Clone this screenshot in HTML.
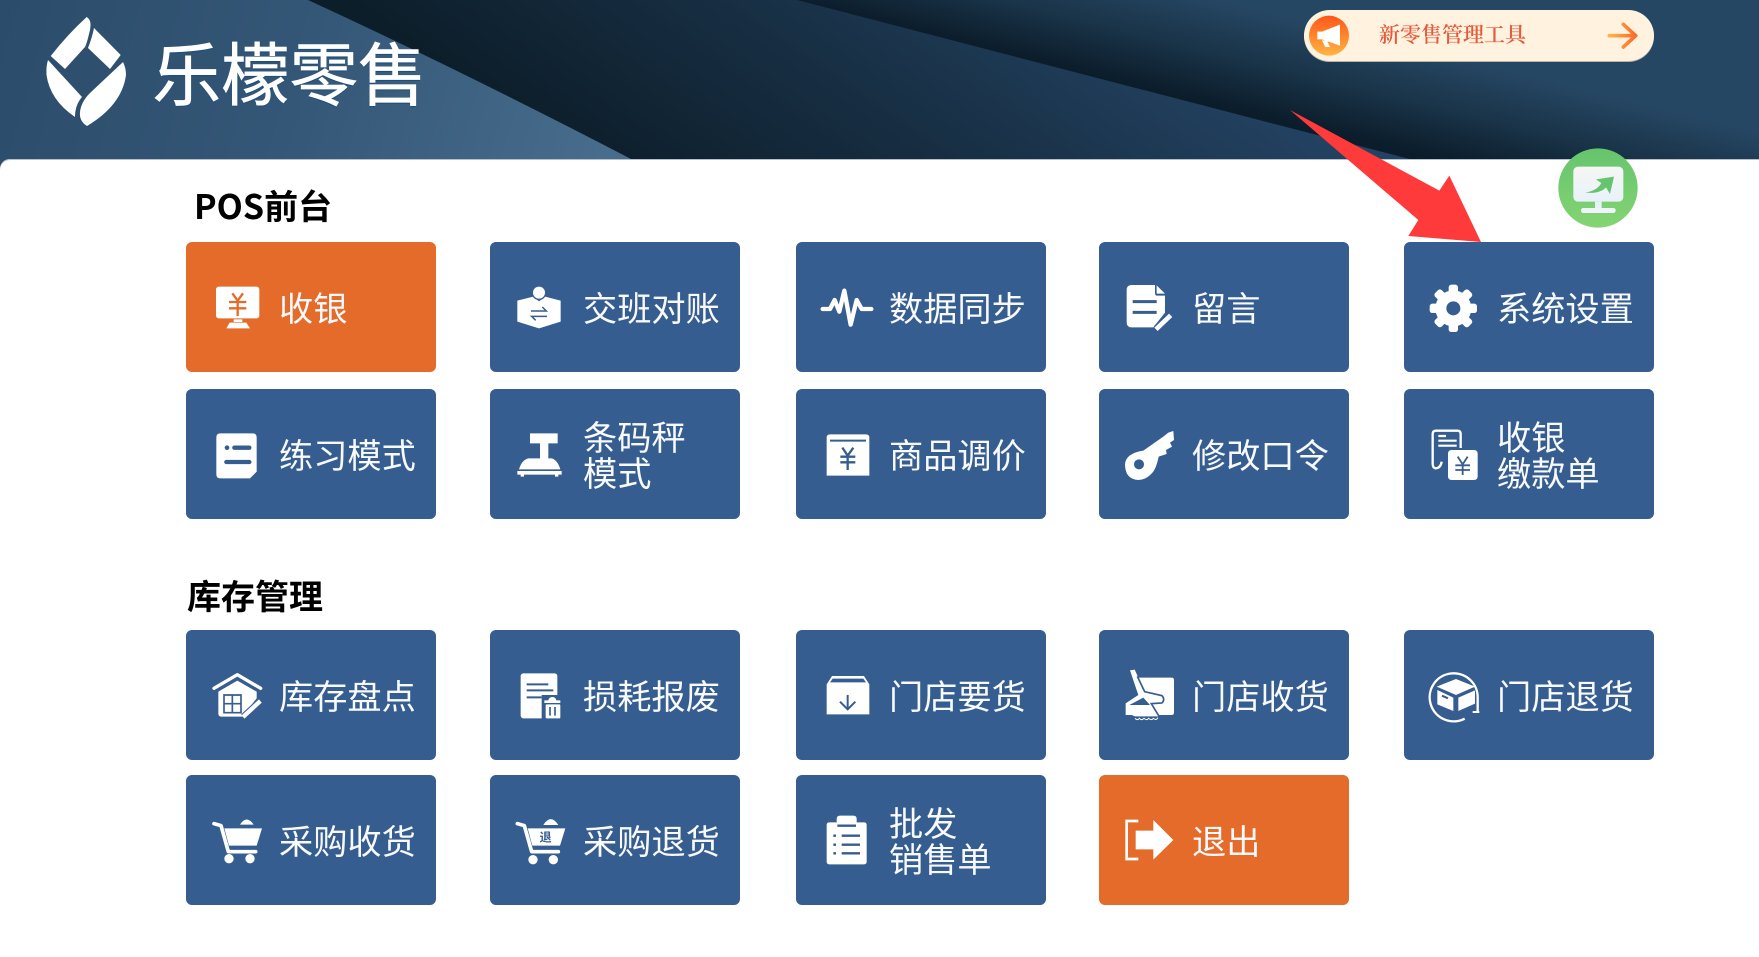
<!DOCTYPE html>
<html lang="zh-CN">
<head>
<meta charset="utf-8">
<title>乐檬零售</title>
<style>
html,body{margin:0;padding:0;background:#fff}
#p{position:relative;width:1759px;height:957px;overflow:hidden;background:#fff;font-family:"Noto Sans CJK SC","Liberation Sans",sans-serif;filter:blur(.35px)}
#hd{position:absolute;left:0;top:0}
#panel{position:absolute;left:0;top:159px;width:1759px;height:798px;background:#fff;border-top-left-radius:10px;box-shadow:inset 0 1px 0 #b4c0cc}
.brand{position:absolute;left:152.5px;top:23px;font-size:68.5px;line-height:96px;color:#fff;-webkit-text-stroke:.7px #fff;text-shadow:0 1.5px 0 #1d4f7c;white-space:nowrap}
.h{position:absolute;font-size:34px;font-weight:700;line-height:40px;color:#000;white-space:nowrap}
.c{position:absolute;width:250px;height:130px;background:#365d8f;border-radius:6px;color:#f7f9fb;font-size:34.2px;line-height:36px}
.c.o{background:#e46b2a}
.c span{position:absolute;left:93px;top:-1px;height:130px;display:flex;align-items:center;white-space:nowrap}
.pill{position:absolute;left:1304px;top:10px;width:350px;height:50.5px;border-radius:26px;background:#fff3df;box-shadow:0 1px 0 #b9b5a8}
.pill b{position:absolute;left:75px;top:0;line-height:49px;font-size:21px;font-weight:600;color:#e65a3b;font-family:"Noto Serif CJK SC","Liberation Serif",serif;white-space:nowrap}
#ov{position:absolute;left:0;top:0;pointer-events:none}
</style>
</head>
<body>
<div id="p">
<svg id="hd" width="1759" height="175" viewBox="0 0 1759 175">
<defs>
<linearGradient id="gL" gradientUnits="userSpaceOnUse" x1="0" y1="0" x2="600" y2="170"><stop offset="0" stop-color="#2b4c6a"/><stop offset=".5" stop-color="#355777"/><stop offset="1" stop-color="#476c8c"/></linearGradient>
<linearGradient id="gM" gradientUnits="userSpaceOnUse" x1="470" y1="80" x2="800" y2="-400"><stop offset="0" stop-color="#0d1e2b"/><stop offset=".35" stop-color="#172e42"/><stop offset=".75" stop-color="#234262"/><stop offset="1" stop-color="#264663"/></linearGradient>
<linearGradient id="gR" gradientUnits="userSpaceOnUse" x1="1100" y1="77" x2="1125" y2="-25"><stop offset="0" stop-color="#0b1c2a"/><stop offset=".5" stop-color="#1a3449"/><stop offset="1" stop-color="#264764"/></linearGradient>
</defs>
<rect width="1759" height="175" fill="url(#gR)"/>
<path d="M308 0L797 0L1760 250L600 250Z" fill="url(#gM)"/>
<path d="M0 0H308Q460 70 631 159L660 175H0Z" fill="url(#gL)"/>
</svg>

<div id="panel"></div>

<div class="brand">乐檬零售</div>

<div class="pill"><b>新零售管理工具</b></div>

<div class="h" style="left:194px;top:185px">POS前台</div>
<div class="h" style="left:187px;top:575px">库存管理</div>

<div class="c o" style="left:186px;top:242px"><span>收银</span></div>
<div class="c" style="left:490px;top:242px"><span>交班对账</span></div>
<div class="c" style="left:796px;top:242px"><span>数据同步</span></div>
<div class="c" style="left:1099px;top:242px"><span>留言</span></div>
<div class="c" style="left:1404px;top:242px"><span>系统设置</span></div>

<div class="c" style="left:186px;top:389px"><span>练习模式</span></div>
<div class="c" style="left:490px;top:389px"><span>条码秤<br>模式</span></div>
<div class="c" style="left:796px;top:389px"><span>商品调价</span></div>
<div class="c" style="left:1099px;top:389px"><span>修改口令</span></div>
<div class="c" style="left:1404px;top:389px"><span>收银<br>缴款单</span></div>

<div class="c" style="left:186px;top:629.5px"><span>库存盘点</span></div>
<div class="c" style="left:490px;top:629.5px"><span>损耗报废</span></div>
<div class="c" style="left:796px;top:629.5px"><span>门店要货</span></div>
<div class="c" style="left:1099px;top:629.5px"><span>门店收货</span></div>
<div class="c" style="left:1404px;top:629.5px"><span>门店退货</span></div>

<div class="c" style="left:186px;top:774.5px"><span>采购收货</span></div>
<div class="c" style="left:490px;top:774.5px"><span>采购退货</span></div>
<div class="c" style="left:796px;top:774.5px"><span>批发<br>销售单</span></div>
<div class="c o" style="left:1099px;top:774.5px"><span>退出</span></div>

<svg id="ov" width="1759" height="957" viewBox="0 0 1759 957">
<defs>
<linearGradient id="gPin" x1="0" y1="0" x2="0" y2="1"><stop offset="0" stop-color="#ff5618"/><stop offset="1" stop-color="#ffb544"/></linearGradient>
<linearGradient id="gArr" x1="0" y1="0" x2="1" y2="0"><stop offset="0" stop-color="#ffb347"/><stop offset="1" stop-color="#ff6a2a"/></linearGradient>
<linearGradient id="gGr" x1="0" y1="0" x2="0" y2="1"><stop offset="0" stop-color="#66c46e"/><stop offset="1" stop-color="#84d472"/></linearGradient>
<linearGradient id="gMon" x1="0" y1="0" x2="0" y2="1"><stop offset="0" stop-color="#f6f6f4"/><stop offset="1" stop-color="#e8f2fb"/></linearGradient>
<filter id="soft" x="-30%" y="-30%" width="160%" height="160%"><feGaussianBlur stdDeviation="5"/></filter>
</defs>

<!-- logo -->
<g fill="#fff">
<path d="M86.7 17C91 20 91 24 90 30C88 38 87 43 85 47L65 69L50.7 56Q68 34 86.7 17Z"/>
<path d="M94 28L120.7 55L110 69L88 48Q92 38 94 28Z"/>
<path d="M48 60L82 97Q75 105 75 117Q50 100 46.5 75Q46 66 48 60Z"/>
<path d="M123 62Q126 68 126 75Q122 105 87 126Q79 121 80 112Q81 102 90 93Z"/>
</g>

<!-- pill icons -->
<g transform="translate(1280,0) scale(.33333)">
<circle cx="147" cy="107" r="60" fill="url(#gPin)"/>
<path d="M112 95H126L180 74V137L126 118H112Z" fill="#fff"/>
<path d="M126 121L136 141H150L141 122Z" fill="#fff"/>
<path d="M988 107H1066M1030 73L1067 107L1030 141" fill="none" stroke="url(#gArr)" stroke-width="11" stroke-linecap="round" stroke-linejoin="round"/>
<!-- green button -->
<circle cx="954" cy="572" r="60" fill="#7ccf75" opacity=".35" filter="url(#soft)"/>
<circle cx="954" cy="564" r="119" fill="url(#gGr)"/>
<rect x="880" y="500" width="150" height="105" rx="14" fill="url(#gMon)"/>
<path d="M945 605H965V625H945Z" fill="#e8f2fb"/>
<rect x="903" y="624" width="104" height="15" rx="7" fill="#eef4fa"/>
<path d="M915 578Q952 572 964 549L948 538L1002 530L990 582L978 562Q960 582 915 578Z" fill="#66c46e"/>
<!-- red arrow -->
<path d="M30 330L478 572L508 527L603 726L385 708L415 660Z" fill="#ff3a3a"/>
</g>

<!-- zoom 7 icons -->
<g transform="translate(205,280) scale(.33333)">
<rect x="33" y="20" width="130" height="95" rx="8" fill="#fff"/>
<path d="M82 40L98 62L114 40M72 66H124M72 85H124M98 62V108" fill="none" stroke="#e46b2a" stroke-width="7"/>
<path d="M86 118H112V126H86ZM64 145L74 128H124L135 145Z" fill="#fff"/>
<path d="M937 62L985 50L1002 64L1020 50L1067 62V125L1002 145L937 125Z" fill="#fff"/>
<circle cx="1002" cy="38" r="22" fill="#365d8f"/>
<circle cx="1002" cy="38" r="18" fill="#fff"/>
<path d="M978 93H1024L1012 81M1026 109H980L992 121" fill="none" stroke="#365d8f" stroke-width="4.5"/>
<path d="M46 460H143Q155 460 155 472V575L135 595H46Q34 595 34 583V472Q34 460 46 460Z" fill="#fff"/>
<circle cx="66" cy="503" r="7" fill="#365d8f"/>
<path d="M88 503H133M64 546H133" stroke="#365d8f" stroke-width="13" stroke-linecap="round"/>
<path d="M975 460H1058V490H1030V535H1040Q1058 540 1066 568H942Q950 540 970 535H1005V490H975Z" fill="#fff"/>
<path d="M937 573H1070V584H1060V590H1050V584H957V590H947V584H937Z" fill="#fff"/>
</g>

<!-- zoom 8 icons -->
<g transform="translate(810,280) scale(.33333)">
<path d="M38 87H60L74 60L88 95L103 32L122 134L140 60L155 87H184" fill="none" stroke="#fff" stroke-width="13" stroke-linejoin="round" stroke-linecap="round"/>
<path d="M965 15H1035V40Q1035 47 1043 47H1065V98L1030 142H965Q950 142 950 127V30Q950 15 965 15Z" fill="#fff"/>
<path d="M1040 16L1065 41H1040Z" fill="#fff"/>
<path d="M968 65H1040M968 97H1040" stroke="#365d8f" stroke-width="9"/>
<path d="M1040 146L1083 104" stroke="#365d8f" stroke-width="22"/>
<path d="M1038 148L1082 106" stroke="#fff" stroke-width="14"/>
<path d="M60 463H168Q178 463 178 473V587H50V473Q50 463 60 463Z" fill="#fff"/>
<path d="M60 482H168" stroke="#365d8f" stroke-width="6"/>
<path d="M97 503L113 527L130 503M91 530H136M91 547H136M113 527V570" fill="none" stroke="#365d8f" stroke-width="7"/>
<path d="M1000 512L1060 470L1075 458L1090 453L1092 480L1080 488L1086 500L1068 510L1070 522L1046 530Q1040 560 1030 575Q1010 600 985 600Q945 598 945 552Q948 520 1000 512Z" fill="#fff"/>
<circle cx="987" cy="553" r="15" fill="#365d8f"/>
</g>

<!-- zoom 9 icons -->
<g transform="translate(1420,280) scale(.33333)">
<g fill="#fff">
<circle cx="100" cy="85" r="54"/>
<rect x="86" y="14" width="28" height="142" rx="8"/>
<rect x="86" y="14" width="28" height="142" rx="8" transform="rotate(45 100 85)"/>
<rect x="86" y="14" width="28" height="142" rx="8" transform="rotate(90 100 85)"/>
<rect x="86" y="14" width="28" height="142" rx="8" transform="rotate(135 100 85)"/>
</g>
<circle cx="100" cy="85" r="21" fill="#365d8f"/>
<path d="M45 565Q38 562 38 550V462Q38 452 48 452H112Q122 452 122 462V520M45 565Q62 565 65 545" fill="none" stroke="#fff" stroke-width="7"/>
<path d="M55 468H78M55 482H110M55 497H110" stroke="#fff" stroke-width="6.5"/>
<rect x="78" y="504" width="100" height="102" rx="12" fill="#365d8f"/>
<rect x="84" y="510" width="89" height="90" rx="10" fill="#fff"/>
<path d="M113 530L128 553L143 530M106 556H150M106 570H150M128 553V585" fill="none" stroke="#365d8f" stroke-width="5.5"/>
</g>

<!-- zoom 10 icons -->
<g transform="translate(205,665) scale(.33333)">
<path d="M27 70L97 29L167 70" fill="none" stroke="#fff" stroke-width="10" stroke-linecap="round" stroke-linejoin="round"/>
<path d="M40 80L97 47L155 80V100L112 155H50Q40 155 40 145Z" fill="#fff"/>
<path d="M57 90H108V143H57ZM82 90V143M57 116H108" fill="none" stroke="#365d8f" stroke-width="5"/>
<path d="M116 156L168 108" stroke="#365d8f" stroke-width="22"/>
<path d="M114 156L166 108" stroke="#fff" stroke-width="13"/>
<rect x="947" y="25" width="110" height="135" rx="8" fill="#fff"/>
<path d="M965 58H1030M965 76H1045M965 97H1010" stroke="#365d8f" stroke-width="6"/>
<rect x="1010" y="90" width="62" height="80" fill="#365d8f"/>
<path d="M1030 106Q1032 96 1042 96Q1052 96 1054 106H1066V114H1018V106Z" fill="#fff"/>
<rect x="1022" y="118" width="44" height="42" rx="3" fill="#fff"/>
<path d="M1035 126V152M1050 126V152" stroke="#365d8f" stroke-width="5"/>
<path d="M27 476L48 482L70 560H152" fill="none" stroke="#fff" stroke-width="11" stroke-linecap="round" stroke-linejoin="round"/>
<path d="M58 490H171L155 542H72Z" fill="#fff"/>
<path d="M105 479Q125 448 146 479Z" fill="#fff"/>
<circle cx="72" cy="581" r="14" fill="#fff"/><circle cx="135" cy="581" r="14" fill="#fff"/>
<path d="M937 476L958 482L980 560H1060" fill="none" stroke="#fff" stroke-width="11" stroke-linecap="round" stroke-linejoin="round"/>
<path d="M968 490H1081L1065 542H982Z" fill="#fff"/>
<path d="M1015 480Q1037 445 1060 480Z" fill="#fff"/>
<circle cx="984" cy="584" r="14" fill="#fff"/><circle cx="1045" cy="584" r="14" fill="#fff"/>
<text x="1022" y="530" font-size="36" font-weight="700" text-anchor="middle" fill="#365d8f" font-family="'Noto Sans CJK SC',sans-serif">退</text>
</g>

<!-- zoom 11 icons -->
<g transform="translate(810,665) scale(.33333)">
<path d="M50 148V58L66 33H162L178 58V148Z" fill="#fff"/>
<path d="M68 41H160L168 52H60Z" fill="#365d8f"/>
<path d="M113 90V132M90 110L113 133L136 110" fill="none" stroke="#365d8f" stroke-width="6"/>
<path d="M58 472H80V462Q80 452 90 452H130Q140 452 140 462V472H162Q170 472 170 480V590Q170 598 162 598H58Q50 598 50 590V480Q50 472 58 472Z" fill="#fff"/>
<path d="M82 482H138" stroke="#365d8f" stroke-width="7"/>
<path d="M70 512H78M70 539H78M70 565H78M95 512H150M95 539H150M95 565H150" stroke="#365d8f" stroke-width="7"/>
<!-- receive hand -->
<path d="M960 16L974 14L985 38H1085Q1092 38 1092 46V142Q1092 150 1085 150H1044V154H975L965 150H947V115L985 90Z" fill="#fff"/>
<path d="M982 34L1004 80L1056 92Q1066 103 1056 114L1024 116L1046 152" fill="none" stroke="#365d8f" stroke-width="5"/>
<path d="M1000 98L958 120H1020Z" fill="#365d8f"/>
<path d="M975 160Q982 168 988 160Q995 168 1002 160Q1010 168 1016 160Q1024 168 1030 160Q1038 168 1044 158" fill="none" stroke="#fff" stroke-width="3"/>
<path d="M985 468H950V582H985" fill="none" stroke="#fff" stroke-width="8"/>
<path d="M977 497H1030V465L1090 525L1030 584V553H977Z" fill="#fff"/>
</g>

<!-- zoom 12 icon -->
<g transform="translate(1420,665) scale(.33333)">
<path d="M173 140V100A72 72 0 1 0 134 161" fill="none" stroke="#fff" stroke-width="7"/>
<path d="M158 141H178" stroke="#fff" stroke-width="6"/>
<path d="M50 65L108 42L165 65L108 90Z" fill="#fff"/>
<path d="M52 75L100 98V138L52 118Z" fill="#fff"/>
<path d="M115 98L165 76V116L115 138Z" fill="#fff"/>
<path d="M66 92L84 100" stroke="#365d8f" stroke-width="6"/>
</g>
</svg>
</div>
</body>
</html>
